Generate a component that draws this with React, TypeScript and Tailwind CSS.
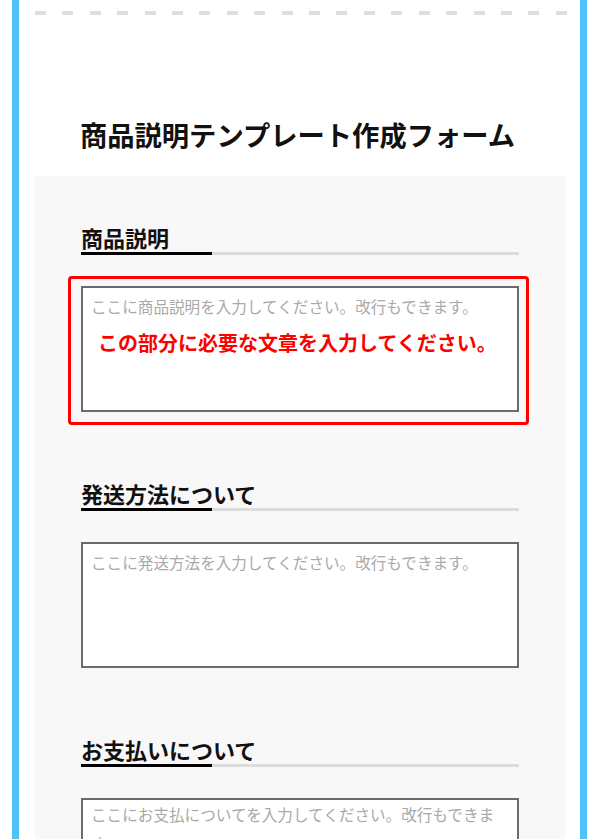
import React from 'react';

const font = { fontFamily: '"Noto Sans CJK JP", "Noto Sans", sans-serif' };

interface SectionProps {
  title: string;
  placeholder: string;
  annotated?: boolean;
  last?: boolean;
}

function Section({ title, placeholder, annotated, last }: SectionProps) {
  return (
    <div className={last ? '' : 'mb-[67px]'}>
      <h2 className="text-[22px] leading-[29px] font-bold text-[#111]">{title}</h2>
      <div className="h-[3px] bg-[#dcdcdc] flex">
        <div className="w-[131px] h-full bg-black" />
      </div>
      <div className="relative mt-[31px]">
        {annotated && (
          <div className="absolute -left-[13px] -top-[10px] -right-[10px] -bottom-[13px] border-[3px] border-[#ff0000] rounded-[4px] pointer-events-none" />
        )}
        <textarea
          readOnly
          placeholder={placeholder}
          className={
            'block w-full h-[126px] resize-none bg-white border-2 border-[#6b6b6b] px-[8px] text-[15.6px] leading-[29px] text-[#333] placeholder:text-[#a9a9a9] outline-none ' +
            (last ? 'pt-0' : 'pt-[4px]')
          }
          style={font}
        />
        {annotated && (
          <p className="absolute left-[17px] top-[43px] text-[20px] leading-[28px] font-bold text-[#ff0000]">
            この部分に必要な文章を入力してください。
          </p>
        )}
      </div>
    </div>
  );
}

export default function App() {
  const dashes = Array.from({ length: 20 });

  return (
    <div className="min-h-screen bg-white" style={font}>
      <div className="ml-[12px] w-[575px] min-h-screen border-x-[7px] border-[#4fc3f7] pt-[11px] pb-10">
        <div className="ml-[16px] w-[532px] flex justify-between">
          {dashes.map((_, i) => (
            <div key={i} className="w-[11px] h-[4px] bg-[#dedede]" />
          ))}
        </div>

        <h1 className="mt-[99px] text-center text-[27.3px] leading-[40px] font-bold text-[#111] pr-[4px]">
          商品説明テンプレート作成フォーム
        </h1>

        <div className="mt-[22px] ml-[16px] w-[530px] bg-[#f8f8f8] px-[46px] pt-[47px] pb-10">
          <Section
            title="商品説明"
            placeholder="ここに商品説明を入力してください。改行もできます。"
            annotated
          />
          <Section
            title="発送方法について"
            placeholder="ここに発送方法を入力してください。改行もできます。"
          />
          <Section
            title="お支払いについて"
            placeholder="ここにお支払についてを入力してください。改行もできます。"
            last
          />
        </div>
      </div>
    </div>
  );
}
